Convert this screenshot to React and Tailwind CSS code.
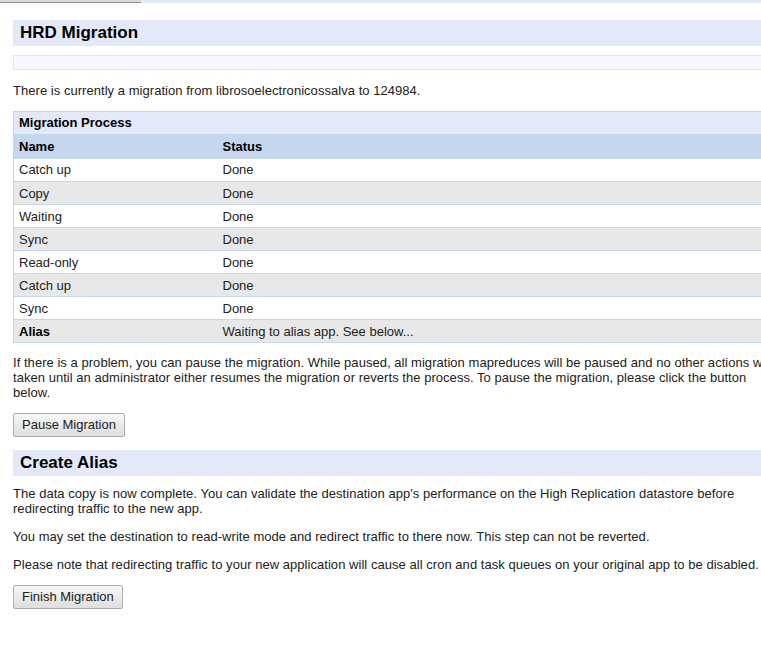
export default function App() {
  const rows = [
    ["Catch up", "Done"],
    ["Copy", "Done"],
    ["Waiting", "Done"],
    ["Sync", "Done"],
    ["Read-only", "Done"],
    ["Catch up", "Done"],
    ["Sync", "Done"],
  ];
  const btn =
    "h-[24px] px-[8px] rounded-[2px] border border-[#acacac] bg-gradient-to-b from-[#f7f7f7] to-[#dedede] text-[13px] text-[#222] leading-[22px]";
  return (
    <div className="w-[761px] h-[664px] overflow-hidden bg-white font-['Liberation_Sans',Arial,sans-serif] text-[13px] text-[#222]">
      <div className="flex h-[3px]">
        <div className="w-[141px] bg-[#d9d9d9] border-b border-[#8f8f8f]" />
        <div className="flex-1 bg-[#e3e9f8]" />
      </div>
      <div className="ml-[13px] w-[800px]">
        <div className="mt-[17px] h-[26px] bg-[#e3e9f8] pl-[7px] text-[17px] font-bold leading-[26px] text-black">
          HRD Migration
        </div>
        <div className="mt-[9px] h-[15px] bg-[#f5f8fd] border border-[#e1e7f2]" />
        <p className="mt-[13px] leading-[15px] tracking-[0.04px]">
          There is currently a migration from librosoelectronicossalva to 124984.
        </p>
        <table className="mt-[13px] w-full border-collapse border border-[#c5d6ee]">
          <tbody>
            <tr>
              <td colSpan={2} className="h-[22px] bg-[#e3e9f8] px-[5px] font-bold text-black leading-[15px]">
                Migration Process
              </td>
            </tr>
            <tr>
              <td className="h-[25px] w-[209px] bg-[#c5d7ee] px-[5px] pt-[1px] font-bold text-black leading-[15px]">Name</td>
              <td className="h-[25px] bg-[#c5d7ee] px-0 pt-[1px] font-bold text-black leading-[15px]">Status</td>
            </tr>
            {rows.map(([n, s], i) => (
              <tr key={i} className={`border-b border-[#c5d6ee] ${i % 2 ? "bg-[#e8e8e8]" : "bg-white"}`}>
                <td className="h-[23px] px-[5px] leading-[15px]">{n}</td>
                <td className="h-[23px] leading-[15px]">{s}</td>
              </tr>
            ))}
            <tr className="border-b border-[#c5d6ee] bg-[#e8e8e8]">
              <td className="h-[23px] px-[5px] font-bold text-black leading-[15px]">Alias</td>
              <td className="h-[23px] leading-[15px]">Waiting to alias app. See below...</td>
            </tr>
          </tbody>
        </table>
        <p className="mt-[12px] leading-[15px] tracking-[0.04px]">
          If there is a problem, you can pause the migration. While paused, all migration mapreduces will be paused and no other actions will be
          <br />
          taken until an administrator either resumes the migration or reverts the process. To pause the migration, please click the button
          <br />
          below.
        </p>
        <div className="mt-[13px]">
          <button className={btn}>Pause Migration</button>
        </div>
        <div className="mt-[13px] h-[26px] bg-[#e3e9f8] pl-[7px] text-[17px] font-bold leading-[26px] text-black">
          Create Alias
        </div>
        <p className="mt-[10px] leading-[15px] tracking-[0.04px]">
          The data copy is now complete. You can validate the destination app's performance on the High Replication datastore before
          <br />
          redirecting traffic to the new app.
        </p>
        <p className="mt-[13px] leading-[15px] tracking-[0.04px]">
          You may set the destination to read-write mode and redirect traffic to there now. This step can not be reverted.
        </p>
        <p className="mt-[13px] leading-[15px] tracking-[0.04px]">
          Please note that redirecting traffic to your new application will cause all cron and task queues on your original app to be disabled.
        </p>
        <div className="mt-[13px]">
          <button className={btn}>Finish Migration</button>
        </div>
      </div>
    </div>
  );
}
